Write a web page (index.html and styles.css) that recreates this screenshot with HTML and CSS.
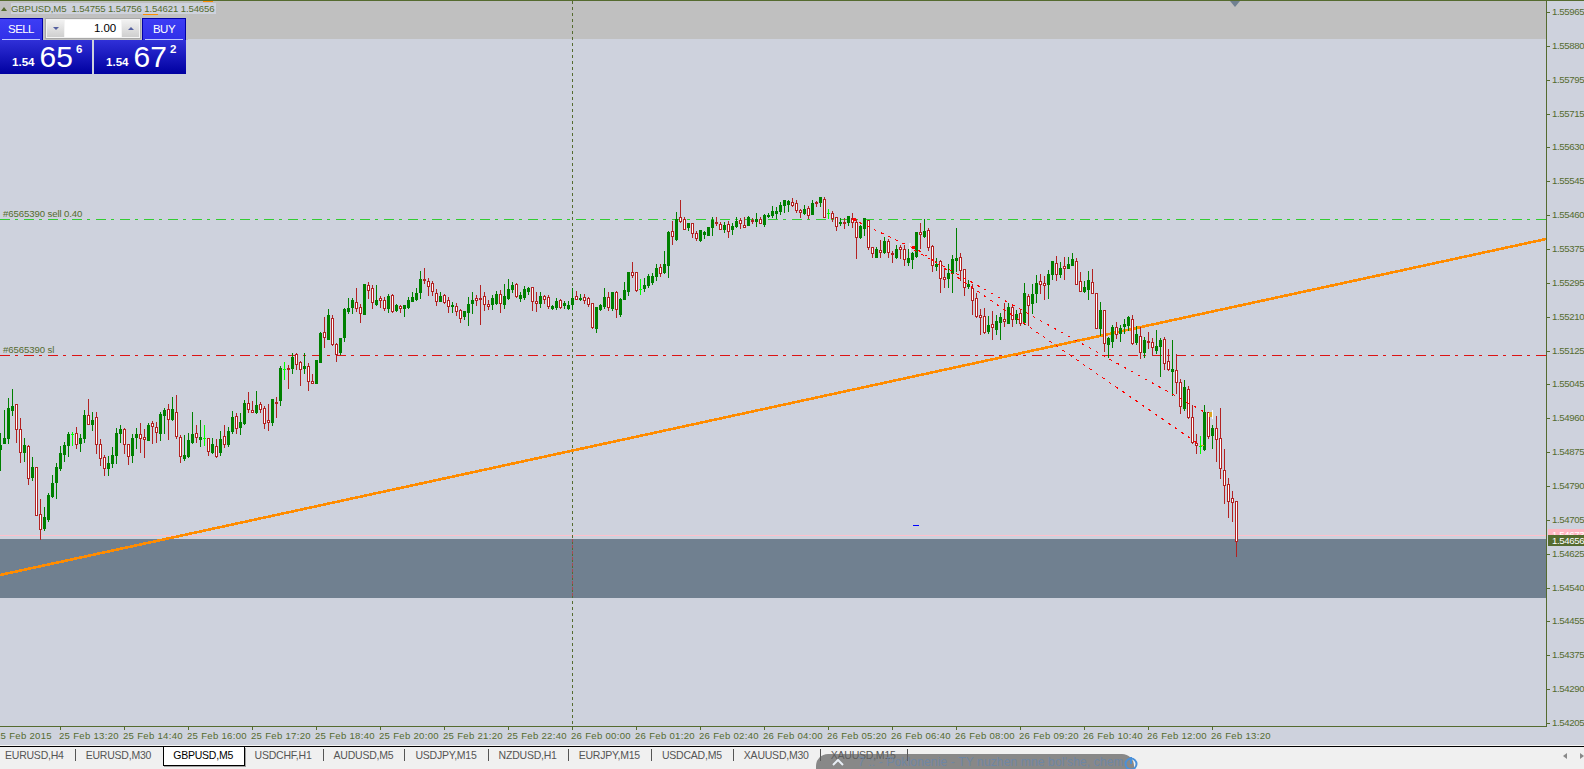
FILE: index.html
```html
<!DOCTYPE html>
<html lang="en">
<head>
<meta charset="utf-8">
<title>GBPUSD,M5</title>
<link rel="stylesheet" href="styles.css">
</head>
<body>
<main class="terminal">
  <section class="chart-window">
    <div class="plot-row">
      <div class="plot">
        <svg class="plot-svg" width="1546" height="725" viewBox="0 1 1546 725" xmlns="http://www.w3.org/2000/svg">
          <rect class="zone-top" x="0" y="1" width="1546" height="38"/>
          <rect class="zone-bid" x="0" y="539" width="1546" height="59"/>
          <line class="ask-line" x1="0" y1="535.5" x2="1546" y2="535.5"/>
          <line class="cross-line" x1="572.5" y1="1" x2="572.5" y2="726"/>
          <line class="cross-line cross-line-zone" x1="572.5" y1="539" x2="572.5" y2="598"/>
          <line class="sell-line" x1="0" y1="219.5" x2="1546" y2="219.5"/>
          <line class="sl-line" x1="0" y1="355.5" x2="1546" y2="355.5"/>
          <line class="trend-line" x1="0" y1="575" x2="1546" y2="239"/>
          <text class="plot-label" x="3" y="217">#6565390 sell 0.40</text>
          <text class="plot-label" x="3" y="353">#6565390 sl</text>
          <g id="candles"></g>
          <line class="trade-line" x1="852" y1="219" x2="911" y2="247"/>
          <line class="trade-line" x1="914" y1="250" x2="1208" y2="414"/>
          <line class="trade-line" x1="918" y1="250" x2="1200" y2="445"/>
          <path class="arrow-halo" d="M910 243v9"/>
          <path class="arrow-red" d="M911 247h4M912 246h3M912 248h3M852 219h4M853 218h3M853 220h3"/>
          <path class="arrow-halo" d="M1212.5 410v9"/>
          <path class="arrow-gold" d="M1209 412h3M1209 413h3M1209 414h3M1209 415h3M1209 416h3M1201 445h3"/>
          <rect class="mark-blue" x="913" y="525" width="6" height="1"/>
          <polygon class="mark-slate" points="1230,1 1240,1 1235,7"/>
          <rect class="title-scrap" x="143" y="14" width="15" height="1"/>
          <rect class="title-scrap" x="203" y="1" width="10" height="1"/>
        </svg>
        <div class="title-line">
          <span class="title-arrow"></span>
          <span class="title-text">GBPUSD,M5&nbsp; 1.54755 1.54756 1.54621 1.54656</span>
        </div>
        <div class="trade-panel">
          <div class="panel-top">
            <div class="side-btn side-sell"><span>SELL</span></div>
            <div class="lot-box">
              <span class="lot-step"><i class="tri tri-down"></i></span>
              <span class="lot-value">1.00</span>
              <span class="lot-step"><i class="tri tri-up"></i></span>
            </div>
            <div class="side-btn side-buy"><span>BUY</span></div>
          </div>
          <div class="panel-prices">
            <div class="quote"><span class="q-small">1.54</span><span class="q-big">65</span><span class="q-sup">6</span></div>
            <div class="quote"><span class="q-small">1.54</span><span class="q-big">67</span><span class="q-sup">2</span></div>
          </div>
        </div>
      </div>
      <div class="price-axis">
        <div class="p-tick"><span>1.55965</span></div>
        <div class="p-tick"><span>1.55880</span></div>
        <div class="p-tick"><span>1.55795</span></div>
        <div class="p-tick"><span>1.55715</span></div>
        <div class="p-tick"><span>1.55630</span></div>
        <div class="p-tick"><span>1.55545</span></div>
        <div class="p-tick"><span>1.55460</span></div>
        <div class="p-tick"><span>1.55375</span></div>
        <div class="p-tick"><span>1.55295</span></div>
        <div class="p-tick"><span>1.55210</span></div>
        <div class="p-tick"><span>1.55125</span></div>
        <div class="p-tick"><span>1.55045</span></div>
        <div class="p-tick"><span>1.54960</span></div>
        <div class="p-tick"><span>1.54875</span></div>
        <div class="p-tick"><span>1.54790</span></div>
        <div class="p-tick"><span>1.54705</span></div>
        <div class="p-tick"><span>1.54625</span></div>
        <div class="p-tick"><span>1.54540</span></div>
        <div class="p-tick"><span>1.54455</span></div>
        <div class="p-tick"><span>1.54375</span></div>
        <div class="p-tick"><span>1.54290</span></div>
        <div class="p-tick"><span>1.54205</span></div>
        <div class="tag tag-ask">1.54673</div>
        <div class="tag tag-bid">1.54656</div>
      </div>
    </div>
    <div class="time-axis">
      <div class="t-tick"><span>25 Feb 2015</span></div>
      <div class="t-tick"><span>25 Feb 13:20</span></div>
      <div class="t-tick"><span>25 Feb 14:40</span></div>
      <div class="t-tick"><span>25 Feb 16:00</span></div>
      <div class="t-tick"><span>25 Feb 17:20</span></div>
      <div class="t-tick"><span>25 Feb 18:40</span></div>
      <div class="t-tick"><span>25 Feb 20:00</span></div>
      <div class="t-tick"><span>25 Feb 21:20</span></div>
      <div class="t-tick"><span>25 Feb 22:40</span></div>
      <div class="t-tick"><span>26 Feb 00:00</span></div>
      <div class="t-tick"><span>26 Feb 01:20</span></div>
      <div class="t-tick"><span>26 Feb 02:40</span></div>
      <div class="t-tick"><span>26 Feb 04:00</span></div>
      <div class="t-tick"><span>26 Feb 05:20</span></div>
      <div class="t-tick"><span>26 Feb 06:40</span></div>
      <div class="t-tick"><span>26 Feb 08:00</span></div>
      <div class="t-tick"><span>26 Feb 09:20</span></div>
      <div class="t-tick"><span>26 Feb 10:40</span></div>
      <div class="t-tick"><span>26 Feb 12:00</span></div>
      <div class="t-tick"><span>26 Feb 13:20</span></div>
    </div>
  </section>
  <nav class="tabs">
    <div class="tab tab-first">EURUSD,H4</div>
    <div class="tab tab-before-active">EURUSD,M30</div>
    <div class="tab tab-active">GBPUSD,M5</div>
    <div class="tab">USDCHF,H1</div>
    <div class="tab">AUDUSD,M5</div>
    <div class="tab">USDJPY,M15</div>
    <div class="tab">NZDUSD,H1</div>
    <div class="tab">EURJPY,M15</div>
    <div class="tab">USDCAD,M5</div>
    <div class="tab">XAUUSD,M30</div>
    <div class="tab">XAUUSD,M15</div>
    <div class="tab-scroll">
      <i class="scroll-tri scroll-left"></i>
      <i class="scroll-tri scroll-right"></i>
    </div>
  </nav>
  <div class="player-bar">
    <svg class="player-chevron" width="12" height="8" viewBox="0 0 12 8" xmlns="http://www.w3.org/2000/svg"><path d="M1 7l5-5 5 5" fill="none" stroke="#e8eef5" stroke-width="2"/></svg>
    <span class="player-title">7 :: - Poklonenie - TY nuzhen mne bol'she, chem</span>
    <svg class="player-power" width="14" height="14" viewBox="0 0 14 14" xmlns="http://www.w3.org/2000/svg"><circle cx="7" cy="8" r="5.5" fill="none" stroke="#4a90d9" stroke-width="2"/><path d="M7 1v7" stroke="#4a90d9" stroke-width="2"/></svg>
  </div>
</main>
<script src="chart.js"></script>
</body>
</html>
```

FILE: styles.css
```css
* { box-sizing: border-box; }
html, body { margin: 0; padding: 0; height: 100%; overflow: hidden; background: #f0f0f0; }
body { font-family: "Liberation Sans", Arial, sans-serif; font-size: 9.6px; color: #556b2f; }

.terminal { position: relative; width: 1584px; height: 769px; overflow: hidden; display: flex; flex-direction: column; }

.chart-window { height: 746px; background: #ced2dd; border-bottom: 1px solid #f4f4f4; flex: none; display: flex; flex-direction: column; overflow: hidden; }
.plot-row { display: flex; height: 727px; flex: none; border-top: 1px solid #556b2f; }
.plot { position: relative; width: 1547px; height: 726px; flex: none; border-right: 1px solid #556b2f; border-bottom: 1px solid #556b2f; }
.plot-svg { display: block; }

.zone-top { fill: #c0c0c0; }
.zone-bid { fill: #708090; }
.ask-line { stroke: #ffc0cb; stroke-width: 1; }
.cross-line { stroke: #556b2f; stroke-width: 1; stroke-dasharray: 3 3; }
.cross-line-zone { stroke: #a84a55; }
.sell-line { stroke: #32cd32; stroke-width: 1; stroke-dasharray: 10 5 3 6; }
.sl-line { stroke: #dc1414; stroke-width: 1; stroke-dasharray: 10 5 3 6; }
.trend-line { stroke: #ff8c00; stroke-width: 2.6; shape-rendering: crispEdges; }
.trade-line { stroke: #ff0000; stroke-width: 1; stroke-dasharray: 3 5; shape-rendering: crispEdges; }
.plot-label { fill: #556b2f; font-family: "Liberation Sans", Arial, sans-serif; font-size: 9.6px; letter-spacing: -.1px; }
.arrow-halo { stroke: #ffffff; stroke-width: 1; fill: none; }
.arrow-red { stroke: #ff0000; stroke-width: 1; fill: none; shape-rendering: crispEdges; }
.arrow-gold { stroke: #daa520; stroke-width: 1; fill: none; shape-rendering: crispEdges; }
.mark-blue { fill: #0000ff; }
.mark-slate { fill: #708090; }
.title-scrap { fill: #ff8c00; }

.c-wick-g { fill: #008000; }
.c-wick-r { fill: #b22222; }
.c-wick-l { fill: #00ff00; }
.c-body-g { fill: #008000; }
.c-body-r { fill: #ffffff; stroke: #b22222; stroke-width: 1; }
.c-body-l { fill: #00ff00; }

.title-line { position: absolute; left: 0; top: 2px; display: flex; align-items: center; height: 11px; }
.title-arrow { width: 0; height: 0; margin: 0 4px 0 1px; border-left: 3px solid transparent; border-right: 3px solid transparent; border-bottom: 4px solid #556b2f; }
.title-text { background: #ced2dd; padding: 0 1px 0 0; line-height: 11px; white-space: pre; letter-spacing: -.12px; }

.trade-panel { position: absolute; left: 0; top: 16px; width: 188px; display: flex; flex-direction: column; color: #fff; }
.panel-top { display: flex; height: 23px; padding-top: 1px; background: #c0c0c0; }
.side-btn { height: 22px; display: flex; justify-content: center; border: 1px solid #0000a8; border-bottom: 0; background: linear-gradient(#3d3df5, #3030e8); font-size: 11.5px; letter-spacing: -.55px; }
.side-btn span { flex: 1; text-align: center; margin: 0 2px; height: 21px; line-height: 20px; border-bottom: 1px solid #c0c8ff; }
.side-sell { width: 43px; border-left: 0; }
.side-buy { width: 44px; margin-left: 1px; }
.lot-box { width: 96px; height: 21px; margin: 0 0 0 2px; display: flex; align-items: stretch; gap: 1px; padding: 1px; background: #f4f4f4; border: 1px solid #a8a8a8; }
.lot-step { flex: 0 0 17px; display: flex; align-items: center; justify-content: center; background: linear-gradient(#f2f2f2, #cfcfcf); }
.lot-value { flex: 1; background: #fff; color: #000; font-size: 11.5px; text-align: right; line-height: 17px; padding-right: 5px; letter-spacing: -.1px; }
.tri { width: 0; height: 0; border-left: 3px solid transparent; border-right: 3px solid transparent; }
.tri-down { border-top: 3px solid #5560a0; }
.tri-up { border-bottom: 3px solid #5560a0; }
.panel-prices { display: flex; gap: 2px; }
.quote { width: 92px; height: 34px; display: flex; background: linear-gradient(#3030d8, #0000a0); position: relative; }
.q-small { font-size: 11.6px; font-weight: 700; margin: 15px 0 0 12px; line-height: 14px; }
.q-big { font-size: 30px; line-height: 34px; margin: 0 0 0 5px; }
.q-sup { font-size: 11.5px; font-weight: 700; line-height: 12px; margin: 3px 0 0 3px; }

.price-axis { position: relative; flex: 1; padding-top: 11px; overflow: hidden; }
.p-tick { position: relative; display: flex; height: 33.86px; padding-left: 5px; }
.p-tick::before { content: ""; position: absolute; left: 0; top: 0; width: 3px; height: 1px; background: #556b2f; }
.p-tick span { display: block; line-height: 12px; height: 12px; margin-top: -6px; white-space: nowrap; letter-spacing: -.36px; }
.tag { position: absolute; left: 1px; right: 0; padding-left: 4px; color: #fff; white-space: nowrap; overflow: hidden; letter-spacing: -.36px; }
.tag-ask { top: 528px; height: 7px; line-height: 12px; background: #ffb6c1; }
.tag-bid { top: 534px; height: 11px; line-height: 11px; background: #556b2f; }

.time-axis { display: flex; margin-left: -4px; height: 18px; flex: none; }
.t-tick { position: relative; flex: 0 0 64px; padding-top: 2px; }
.t-tick::before { content: ""; position: absolute; left: 0; top: 0; width: 1px; height: 3px; background: #556b2f; }
.t-tick span { display: block; margin-left: -1px; line-height: 13px; letter-spacing: .28px; white-space: nowrap; }

.tabs { display: flex; height: 20px; flex: none; background: #f0f0f0; border-top: 1px solid #000; color: #555; font-size: 10.5px; letter-spacing: -.22px; }
.tab { height: 18px; padding: 0 12px 0 10px; line-height: 16px; white-space: nowrap; position: relative; }
.tab::after { content: ""; position: absolute; right: 0; top: 2px; width: 1px; height: 12px; background: #555; }
.tab-first { padding: 0 12px 0 5px; }
.tab-before-active::after, .tab-active::after { display: none; }
.tab-active { background: #fff; color: #000; border: 1px solid #000; border-top: 0; height: 19px; padding: 0 10.5px 0 9px; box-shadow: 1px 1px 0 #a0a0a0; }
.tab-scroll { margin-left: auto; display: flex; gap: 13px; align-items: center; height: 18px; }
.scroll-tri { width: 0; height: 0; border-top: 3px solid transparent; border-bottom: 3px solid transparent; }
.scroll-left { border-right: 4px solid #888; }
.scroll-right { border-left: 4px solid #888; }

.player-bar { position: absolute; left: 816px; top: 754px; width: 318px; height: 20px; border-radius: 12px 12px 0 0; background: rgba(95, 95, 95, .72); display: flex; align-items: flex-start; }
.player-chevron { margin: 4px 0 0 16px; flex: none; }
.player-title { margin: 1px 0 0 14px; font-size: 12px; color: #6e86a4; white-space: nowrap; letter-spacing: .15px; flex: 1; }
.player-power { margin: 2px 4px 0 0; flex: none; }
```

FILE: chart.js
```js
var DATA = "g433,445,449,470 g410,438,443,443 g398,408,438,443 g389,406,410,415 r404,404,429,442 r418,429,452,462 g438,445,452,461 r445,446,478,484 g457,467,477,480 r467,467,515,515 r499,514,529,539 g507,517,528,530 g493,495,519,521 g475,483,496,497 g463,467,482,498 g446,453,468,470 g442,445,454,461 g432,434,445,456 l432,434,434,445 r427,433,444,448 g434,438,443,451 g410,415,438,442 r399,415,424,424 g412,420,424,430 r412,417,444,453 r439,444,458,465 r455,457,468,475 g456,463,468,475 g447,455,463,467 g428,433,455,463 g425,429,433,442 r428,429,444,453 r444,444,456,464 g434,438,455,462 g428,434,437,448 r423,434,438,452 r429,437,439,457 g423,425,440,440 r421,423,426,443 r422,427,432,442 g412,414,433,440 g408,410,415,433 r404,409,419,439 g397,409,419,420 r395,412,436,438 r435,437,456,462 g435,455,458,460 g433,440,456,457 g412,434,442,443 r425,433,437,442 g420,437,439,446 l425,438,438,445 r438,438,451,455 g438,444,452,453 r439,446,456,457 g431,439,452,455 r425,436,444,447 g427,431,444,446 g411,417,431,433 r413,416,428,433 g413,422,427,434 g400,403,423,424 r392,403,409,412 r401,410,412,412 g391,405,412,413 r402,404,409,412 r406,408,423,428 r404,420,422,430 g399,399,422,425 r397,402,403,417 g366,368,400,405 l362,369,369,379 r365,368,369,388 g353,357,368,373 r353,354,364,369 r361,362,369,385 g353,366,368,373 r363,366,381,390 r374,381,383,383 g360,360,383,383 g332,333,362,362 r317,332,337,347 g309,315,339,339 r315,318,344,345 r343,344,354,361 g338,338,352,354 g308,309,337,341 g298,308,311,313 g298,300,307,313 r288,302,308,311 r304,307,313,322 g284,284,314,314 r282,285,290,298 r285,288,302,308 g285,300,304,305 r296,298,300,307 r297,300,308,310 g294,296,308,312 r294,295,311,312 g304,305,310,311 r305,306,308,312 g305,305,308,316 g297,300,307,308 g292,297,301,301 g288,293,299,300 g271,279,292,298 r268,279,280,283 r278,281,286,295 r281,283,291,295 r289,293,301,305 g292,296,301,301 r294,295,302,303 r297,300,306,312 g302,305,306,312 r303,306,311,315 r309,310,318,322 g311,311,316,319 g297,304,312,325 g292,300,303,313 r295,298,300,305 r285,298,299,324 r292,296,304,310 r300,304,306,309 g295,298,304,309 g291,294,303,304 r290,294,303,312 g284,296,304,308 g279,289,298,299 g282,285,289,292 r283,284,296,297 g292,295,298,301 g286,289,297,299 g287,288,291,294 r287,287,301,310 r292,301,303,311 g292,296,303,307 r295,296,299,303 r295,297,306,308 g305,306,308,309 g298,301,307,309 r299,300,307,308 g301,303,305,308 g301,305,308,309 g288,298,304,309 r291,296,299,299 g294,298,299,300 r294,297,300,303 r297,298,304,306 r303,303,327,328 g307,307,328,332 g304,305,309,310 g288,297,306,308 r292,297,307,310 g292,292,308,310 r291,292,309,317 g298,299,314,316 g282,290,299,299 g272,272,291,295 r262,272,275,277 r272,272,290,291 l279,289,289,294 g278,285,288,291 g274,276,285,287 g273,276,282,284 g264,268,276,280 r264,267,273,276 g251,264,272,273 g231,232,265,277 r221,231,236,244 g212,219,239,240 r200,217,221,222 r217,219,229,229 g223,223,227,230 r223,223,233,237 r231,233,238,240 g230,230,240,241 g231,232,234,238 g227,227,235,235 g217,220,227,235 r217,222,223,225 r222,224,229,229 g222,225,229,232 r221,224,231,237 g223,226,229,234 g217,221,226,227 r218,220,223,228 r217,225,227,227 g216,217,225,225 r218,220,221,223 g213,219,221,226 r217,219,223,223 g214,215,224,226 g213,215,216,217 g206,211,215,217 g207,211,213,218 g202,205,211,214 g200,200,205,212 g200,201,204,211 r198,202,205,206 r200,203,210,212 r209,210,212,217 g205,209,213,214 r206,208,215,218 g200,203,214,214 r201,202,203,206 g197,197,202,206 r197,199,217,217 l209,213,213,218 r211,213,218,221 r217,217,226,230 g218,222,223,225 r218,222,223,228 g216,216,222,225 r213,218,222,227 r219,222,237,258 g225,226,237,238 g218,218,228,235 r220,220,247,249 r247,247,253,257 g247,249,257,257 r240,250,252,257 g237,241,252,253 r239,241,252,257 r251,253,254,262 g245,249,257,258 r245,247,249,258 r245,249,259,265 g249,258,262,265 g252,253,259,268 g232,232,256,257 r223,232,234,248 g219,231,236,237 r228,230,247,250 r245,246,265,271 g258,264,266,270 r260,261,278,292 r268,277,279,287 g264,273,278,287 g255,259,273,292 g228,258,260,271 r253,257,270,280 r269,269,287,295 g280,284,286,288 r284,288,300,314 r293,298,316,317 r309,315,317,334 r308,316,332,333 g316,325,331,333 r311,324,327,339 g315,321,329,334 g313,317,322,339 r303,319,321,326 g303,307,323,323 r305,307,319,326 g310,314,319,323 r310,313,323,325 g283,293,322,324 r294,296,305,325 g284,294,303,313 g275,283,293,302 r274,281,284,293 r276,283,285,299 g270,274,284,298 g261,261,274,279 r256,263,274,280 g262,268,274,277 r257,266,268,279 g257,264,268,268 g253,259,265,265 r258,261,284,284 r272,281,291,291 g281,287,291,292 g271,280,289,299 r269,282,293,293 r293,293,328,328 g302,310,328,335 r310,310,343,351 g337,338,344,357 g325,327,341,347 r322,327,334,338 g325,328,333,341 g319,324,326,333 g316,317,325,330 r315,319,343,344 g326,334,342,344 r327,336,352,358 g337,340,352,357 r332,341,342,348 r338,342,347,355 g330,346,350,353 g338,340,346,376 r337,339,363,369 r349,361,369,370 g340,369,371,395 r354,370,382,393 r379,382,406,413 g380,387,408,410 r386,389,417,418 r405,417,442,443 r434,443,445,453 l436,446,446,453 g405,412,449,450 r412,412,436,438 g425,428,435,448 r416,428,439,461 r408,438,468,478 r449,470,485,503 r478,484,501,517 r491,498,502,521 r501,501,541,556".split(" ");

var NS = "http://www.w3.org/2000/svg";
var group = document.getElementById("candles");

function addRect(x, y, w, h, cls) {
  var r = document.createElementNS(NS, "rect");
  r.setAttribute("x", x);
  r.setAttribute("y", y);
  r.setAttribute("width", w);
  r.setAttribute("height", h);
  r.setAttribute("class", cls);
  group.appendChild(r);
}

DATA.forEach(function (item, k) {
  var type = item.charAt(0);
  var v = item.slice(1).split(",").map(Number);
  var x = k * 4;
  addRect(x, v[0], 1, v[3] - v[0] + 1, "c-wick-" + type);
  if (type === "r") {
    addRect(x - 0.5, v[1] + 0.5, 2, Math.max(v[2] - v[1], 0.01), "c-body-r");
  } else {
    addRect(x - 1, v[1], 3, v[2] - v[1] + 1, "c-body-" + type);
  }
});
```
